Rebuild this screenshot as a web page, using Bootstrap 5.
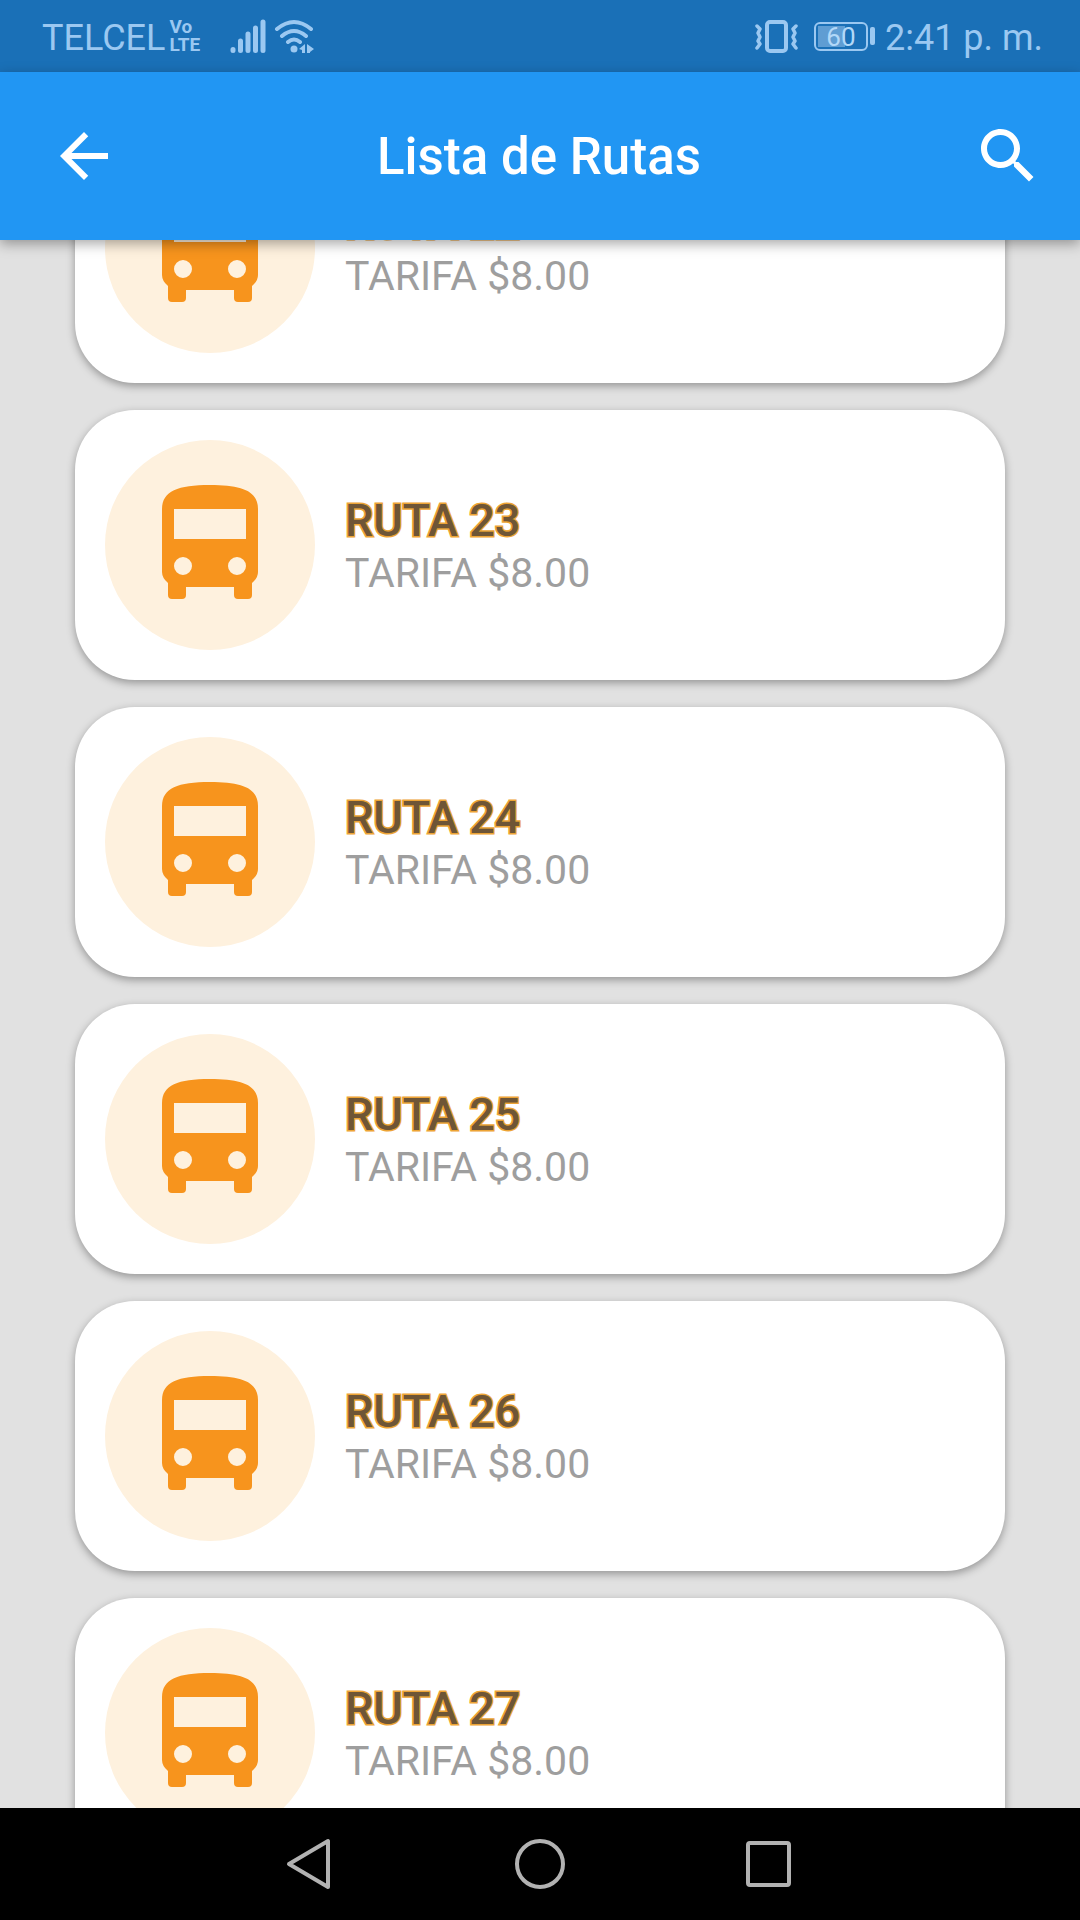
<!DOCTYPE html>
<html lang="es">
<head>
<meta charset="utf-8">
<meta name="viewport" content="width=device-width, initial-scale=1">
<title>Lista de Rutas</title>
<link href="https://cdn.jsdelivr.net/npm/bootstrap@5.3.0/dist/css/bootstrap.min.css" rel="stylesheet">
<style>
  body { font-family: Roboto, "Liberation Sans", sans-serif; background: #e1e1e1; }
  svg { display: block; flex: none; }
  .status-strip { height: 72px; padding: 0 37px 0 42px; background: #1a70b7; color: #9bc8f1; font-size: 36px; line-height: 42px; }
  .volte { font-size: 19px; line-height: 18px; font-weight: 700; }
  .battery-level { width: 54px; height: 29px; border: 2px solid currentColor; border-radius: 6px; font-size: 26px; line-height: 22px; padding: 2px; }
  .battery-level span { background: linear-gradient(90deg, #5f9dd3 58%, transparent 58%); color: #b2d8f8; }
  .battery-tip { width: 5px; height: 18px; margin: 0 10px 0 2px; border-radius: 2px; background: currentColor; }
  .app-bar { height: 168px; padding: 0 36px 0 48px; background: #2196f3; box-shadow: 0 4px 12px rgba(0,0,0,.34); z-index: 2; }
  .app-bar h1 { font-size: 51px; line-height: 60px; font-weight: 500; padding: 2px 14px 0 0; }
  .app-bar button { width: 72px; height: 72px; }
  .route-scroll { min-height: 0; }
  /* list scrolled part way through its first visible card */
  .route-list { gap: 27px; padding: 0 75px; margin-top: -127px; }
  .route-card { height: 270px; padding: 30px; gap: 30px; border-radius: 60px; background: #fff; box-shadow: 0 3px 8px rgba(0,0,0,.34); }
  .route-badge { width: 210px; height: 210px; padding-bottom: 6px; background: #fef1de; }
  .route-name { font-size: 45px; line-height: 56px; font-weight: 500; color: #6e5536; -webkit-text-stroke: 3px #eda435; paint-order: stroke fill; }
  .route-fare { font-size: 41px; line-height: 48px; color: #9e9e9e; }
  .system-nav { height: 112px; background: #000; z-index: 2; }
  .system-nav button { width: 228px; }
</style>
<script src="https://cdn.jsdelivr.net/npm/bootstrap@5.3.0/dist/js/bootstrap.bundle.min.js"></script>
</head>
<body class="d-flex flex-column vh-100 overflow-hidden">
<svg width="0" height="0" class="position-absolute" aria-hidden="true">
  <symbol id="bus" viewBox="0 0 96 114">
    <path fill="#f7941d" fill-rule="evenodd" d="M0 24C0 6 16 0 48 0S96 6 96 24V87Q96 93 90 98V110Q90 114 86 114H76Q72 114 72 110V102H24V110Q24 114 20 114H10Q6 114 6 110V98Q0 93 0 87ZM12 24V54H84V24ZM21 72A9 9 0 1 0 21 90A9 9 0 1 0 21 72ZM75 72A9 9 0 1 0 75 90A9 9 0 1 0 75 72Z"/>
  </symbol>
</svg>

<div class="status-strip d-flex align-items-center justify-content-between flex-shrink-0">
  <div class="d-flex align-items-center">
    <span class="pt-1">TELCEL</span>
    <span class="volte d-flex flex-column ms-1"><span>Vo</span><span>LTE</span></span>
    <svg class="ms-4" width="94" height="36" viewBox="-4 0 94 36" fill="none" stroke="currentColor" stroke-linecap="round" aria-label="Señal móvil y Wi-Fi">
      <path stroke-width="5" d="M5 31.500V32.500M12.500 23V32.500M20 16V32.500M27.500 10V32.500M35 4V32.500"/>
      <path stroke-width="4" d="M49 11Q66 -3 83 11M54 18Q66 8 78 18M60 24Q66 19 72 24"/>
      <circle cx="66" cy="31" r="3.500" fill="currentColor" stroke="none"/>
      <path fill="currentColor" stroke="none" d="M71 31L77 26V35H74V32ZM79 26L86 31L82 34V35H79Z"/>
    </svg>
  </div>
  <div class="d-flex align-items-center">
    <svg width="44" height="36" viewBox="0 0 44 36" fill="none" stroke="currentColor" stroke-width="4" aria-label="Vibración">
      <rect x="13" y="4" width="19" height="29" rx="3"/>
      <path stroke-width="3.500" stroke-linecap="round" stroke-linejoin="round" d="M3 8L6 11L4 15L6 19L4 23L6 26L3 30M42 8L39 11L41 15L39 19L41 23L39 26L42 30"/>
    </svg>
    <span class="battery-level d-flex ms-3"><span class="flex-fill text-center">60</span></span>
    <span class="battery-tip"></span>
    <span class="pt-1">2:41 p. m.</span>
  </div>
</div>

<header class="app-bar d-flex align-items-center justify-content-between position-relative flex-shrink-0">
  <button class="btn p-0 border-0 d-flex align-items-center justify-content-center" type="button" aria-label="Atrás">
    <svg width="72" height="72" viewBox="0 0 24 24" fill="#fff"><path d="M20 11H7.830l5.590-5.590L12 4l-8 8 8 8 1.410-1.410L7.830 13H20v-2z"/></svg>
  </button>
  <h1 class="m-0 flex-fill text-center text-white">Lista de Rutas</h1>
  <button class="btn p-0 border-0 d-flex align-items-center justify-content-center" type="button" aria-label="Buscar">
    <svg width="72" height="72" viewBox="0 0 24 24" fill="#fff"><path d="M15.500 14h-.79l-.28-.27C15.410 12.590 16 11.110 16 9.500 16 5.910 13.090 3 9.500 3S3 5.910 3 9.500 5.910 16 9.500 16c1.610 0 3.090-.59 4.230-1.570l.27.28v.79l5 4.990L20.490 19l-4.990-5zm-6 0C7.010 14 5 11.990 5 9.500S7.010 5 9.500 5 14 7.010 14 9.500 11.990 14 9.500 14z"/></svg>
  </button>
</header>

<main class="route-scroll flex-fill overflow-hidden">
  <ul class="route-list list-unstyled d-flex flex-column mb-0">
    <li class="route-card d-flex align-items-center flex-shrink-0"><div class="route-badge rounded-circle d-flex align-items-center justify-content-center"><svg width="96" height="114"><use href="#bus"/></svg></div><div><div class="route-name">RUTA 22</div><div class="route-fare">TARIFA $8.00</div></div></li>
    <li class="route-card d-flex align-items-center flex-shrink-0"><div class="route-badge rounded-circle d-flex align-items-center justify-content-center"><svg width="96" height="114"><use href="#bus"/></svg></div><div><div class="route-name">RUTA 23</div><div class="route-fare">TARIFA $8.00</div></div></li>
    <li class="route-card d-flex align-items-center flex-shrink-0"><div class="route-badge rounded-circle d-flex align-items-center justify-content-center"><svg width="96" height="114"><use href="#bus"/></svg></div><div><div class="route-name">RUTA 24</div><div class="route-fare">TARIFA $8.00</div></div></li>
    <li class="route-card d-flex align-items-center flex-shrink-0"><div class="route-badge rounded-circle d-flex align-items-center justify-content-center"><svg width="96" height="114"><use href="#bus"/></svg></div><div><div class="route-name">RUTA 25</div><div class="route-fare">TARIFA $8.00</div></div></li>
    <li class="route-card d-flex align-items-center flex-shrink-0"><div class="route-badge rounded-circle d-flex align-items-center justify-content-center"><svg width="96" height="114"><use href="#bus"/></svg></div><div><div class="route-name">RUTA 26</div><div class="route-fare">TARIFA $8.00</div></div></li>
    <li class="route-card d-flex align-items-center flex-shrink-0"><div class="route-badge rounded-circle d-flex align-items-center justify-content-center"><svg width="96" height="114"><use href="#bus"/></svg></div><div><div class="route-name">RUTA 27</div><div class="route-fare">TARIFA $8.00</div></div></li>
  </ul>
</main>

<nav class="system-nav d-flex align-items-stretch justify-content-center flex-shrink-0" aria-label="Sistema">
  <button class="btn p-0 border-0 d-flex align-items-center justify-content-center" type="button" aria-label="Volver">
    <svg width="52" height="52" viewBox="0 0 52 52" fill="none" stroke="#b2b2b2" stroke-width="4" stroke-linejoin="round"><path d="M42 3V49L3 26Z"/></svg>
  </button>
  <button class="btn p-0 border-0 d-flex align-items-center justify-content-center" type="button" aria-label="Inicio">
    <svg width="52" height="52" viewBox="0 0 52 52" fill="none" stroke="#b2b2b2" stroke-width="4"><circle cx="26" cy="26" r="23"/></svg>
  </button>
  <button class="btn p-0 border-0 d-flex align-items-center justify-content-center" type="button" aria-label="Recientes">
    <svg width="52" height="52" viewBox="0 0 52 52" fill="none" stroke="#b2b2b2" stroke-width="4"><rect x="6" y="5" width="41" height="42" rx="2"/></svg>
  </button>
</nav>
</body>
</html>
